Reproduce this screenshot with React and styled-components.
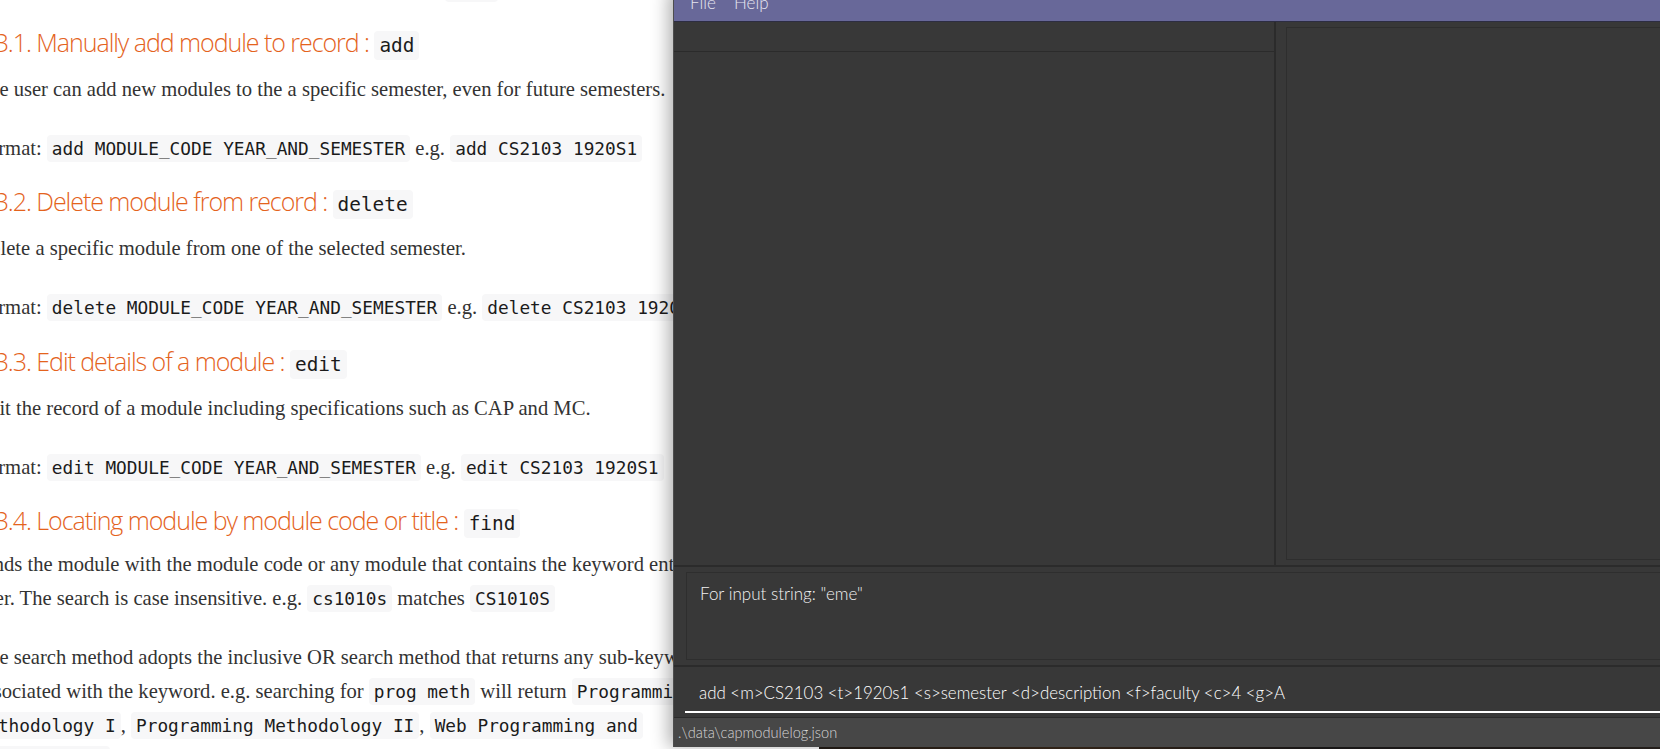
import React from "react";
import styled, { createGlobalStyle } from "styled-components";

const GlobalStyle = createGlobalStyle`
  html, body {
    margin: 0;
    padding: 0;
    background: #ffffff;
    overflow: hidden;
  }
`;

const Screen = styled.div`
  position: relative;
  width: 1660px;
  height: 749px;
  overflow: hidden;
  background: #ffffff;
`;

/* ---------- user guide page behind the app window ---------- */

const Guide = styled.article`
  margin: -29px 0 0 -23.5px;
  width: 1100px;
  font-family: "Liberation Serif", "Times New Roman", serif;
  font-size: 20.6px;
  line-height: 34px;
  color: #333333;
`;

const Para = styled.p`
  margin: ${p => (p.$tight ? "0" : "25px")} 0 0;
`;

const Heading = styled.h3`
  margin: 22.5px 0 ${p => (p.$tight ? "12px" : "15px")};
  font-family: "Open Sans", sans-serif;
  font-weight: 300;
  font-size: 25px;
  line-height: 29px;
  color: #e4631d;
  letter-spacing: -1.05px;
  & + ${Para} {
    margin-top: 0;
  }
`;

const Code = styled.code`
  font-family: "DejaVu Sans Mono", monospace;
  font-size: ${p => (p.$big ? "19.4px" : "17.8px")};
  line-height: 1;
  padding: ${p => (p.$cont ? "3px 5px 3px 0" : "3px 5px")};
  border-radius: ${p => (p.$cont ? "0 4px 4px 0" : "4px")};
  background: #f7f7f8;
  color: #1b1b1b;
  letter-spacing: 0;
`;

/* ---------- JavaFX app window ---------- */

const Window = styled.section`
  position: absolute;
  left: 673px;
  top: -10px;
  width: 1000px;
  height: 757px;
  display: flex;
  flex-direction: column;
  background: #383838;
  border-left: 1px solid #4e4e4e;
  box-shadow: -5px 0 16px rgba(0, 0, 0, 0.3);
  font-family: "Lato", "Segoe UI", sans-serif;
  font-weight: 300;
  color: #f4f4f4;
`;

const MenuBar = styled.nav`
  flex: none;
  height: 32px;
  box-sizing: border-box;
  display: flex;
  align-items: flex-start;
  gap: 18px;
  padding: 3px 0 0 16px;
  background: #686899;
  border-bottom: 1px solid #2d2d42;
`;

const MenuItem = styled.span`
  font-size: 17px;
  line-height: 20px;
  color: #e6e6f0;
`;

const Main = styled.div`
  flex: none;
  height: 543px;
  display: flex;
`;

const ListPane = styled.div`
  width: 600px;
  display: flex;
  flex-direction: column;
`;

const ListHeader = styled.div`
  height: 29px;
  border-bottom: 1px solid #2b2b2b;
`;

const Divider = styled.div`
  width: 2px;
  background: #2b2b2b;
`;

const DetailPane = styled.div`
  flex: 1;
  display: flex;
  padding: 5px 0 5px 10px;
`;

const DetailBox = styled.div`
  flex: 1;
  border: 1px solid #2e2e2e;
  border-right: none;
`;

const Rule = styled.div`
  flex: none;
  height: 2px;
  background: #2b2b2b;
`;

const ResultArea = styled.div`
  flex: none;
  padding: 5px 0 5px 12px;
`;

const ResultBox = styled.div`
  height: 66px;
  padding: 10px 13px;
  border: 1px solid #2e2e2e;
  border-right: none;
  font-size: 17px;
  line-height: 22px;
  color: #f2f2f2;
`;

const CommandArea = styled.div`
  flex: none;
  height: 50px;
  box-sizing: border-box;
  padding: 15px 0 0 11px;
`;

const CommandInput = styled.div`
  padding: 0 0 7px 14px;
  border-bottom: 2px solid #ffffff;
  font-size: 16.9px;
  line-height: 22px;
  color: #ffffff;
  white-space: pre;
`;

const StatusBar = styled.footer`
  flex: none;
  height: 29px;
  display: flex;
  align-items: center;
  padding-left: 4px;
  border-top: 1px solid #2b2b2b;
  background: #474747;
  font-size: 14.6px;
  color: #d6d6d6;
`;

const BackdropStrip = styled.div`
  position: absolute;
  left: 819px;
  right: 0;
  bottom: 0;
  height: 2px;
  background: linear-gradient(90deg, #241d18 0%, #3a2a1c 30%, #1d1b1b 60%, #2a2420 100%);
`;

const App = () => {
  return (
    <Screen>
      <GlobalStyle />
      <Guide>
        <Para $tight>
          Lists all commands available in the application. Format: <Code>help</Code>
        </Para>

        <Heading>
          4.3.1. Manually add module to record : <Code $big>add</Code>
        </Heading>
        <Para>The user can add new modules to the a specific semester, even for future semesters.</Para>
        <Para>
          Format: <Code>add MODULE_CODE YEAR_AND_SEMESTER</Code> e.g. <Code>add CS2103 1920S1</Code>
        </Para>

        <Heading>
          4.3.2. Delete module from record : <Code $big>delete</Code>
        </Heading>
        <Para>Delete a specific module from one of the selected semester.</Para>
        <Para>
          Format: <Code>delete MODULE_CODE YEAR_AND_SEMESTER</Code> e.g. <Code>delete CS2103 1920S1</Code>
        </Para>

        <Heading>
          4.3.3. Edit details of a module : <Code $big>edit</Code>
        </Heading>
        <Para>Edit the record of a module including specifications such as CAP and MC.</Para>
        <Para>
          Format: <Code>edit MODULE_CODE YEAR_AND_SEMESTER</Code> e.g. <Code>edit CS2103 1920S1</Code>
        </Para>

        <Heading $tight>
          4.3.4. Locating module by module code or title : <Code $big>find</Code>
        </Heading>
        <Para>
          Finds the module with the module code or any module that contains the keyword entered by the
          <br />
          user. The search is case insensitive. e.g. <Code>cs1010s</Code> matches <Code>CS1010S</Code>
        </Para>
        <Para>
          The search method adopts the inclusive OR search method that returns any sub-keyword
          <br />
          associated with the keyword. e.g. searching for <Code>prog meth</Code> will return{" "}
          <Code>Programming</Code>
          <br />
          <Code $cont>Methodology I</Code>, <Code>Programming Methodology II</Code>,{" "}
          <Code>Web Programming and</Code>
          <br />
          <Code $cont>Applications</Code>
        </Para>
      </Guide>

      <BackdropStrip />

      <Window>
        <MenuBar>
          <MenuItem>File</MenuItem>
          <MenuItem>Help</MenuItem>
        </MenuBar>
        <Main>
          <ListPane>
            <ListHeader />
          </ListPane>
          <Divider />
          <DetailPane>
            <DetailBox />
          </DetailPane>
        </Main>
        <Rule />
        <ResultArea>
          <ResultBox>For input string: "eme"</ResultBox>
        </ResultArea>
        <Rule />
        <CommandArea>
          <CommandInput>add &lt;m&gt;CS2103 &lt;t&gt;1920s1 &lt;s&gt;semester &lt;d&gt;description &lt;f&gt;faculty &lt;c&gt;4 &lt;g&gt;A</CommandInput>
        </CommandArea>
        <StatusBar>.\data\capmodulelog.json</StatusBar>
      </Window>
    </Screen>
  );
};

export default App;
